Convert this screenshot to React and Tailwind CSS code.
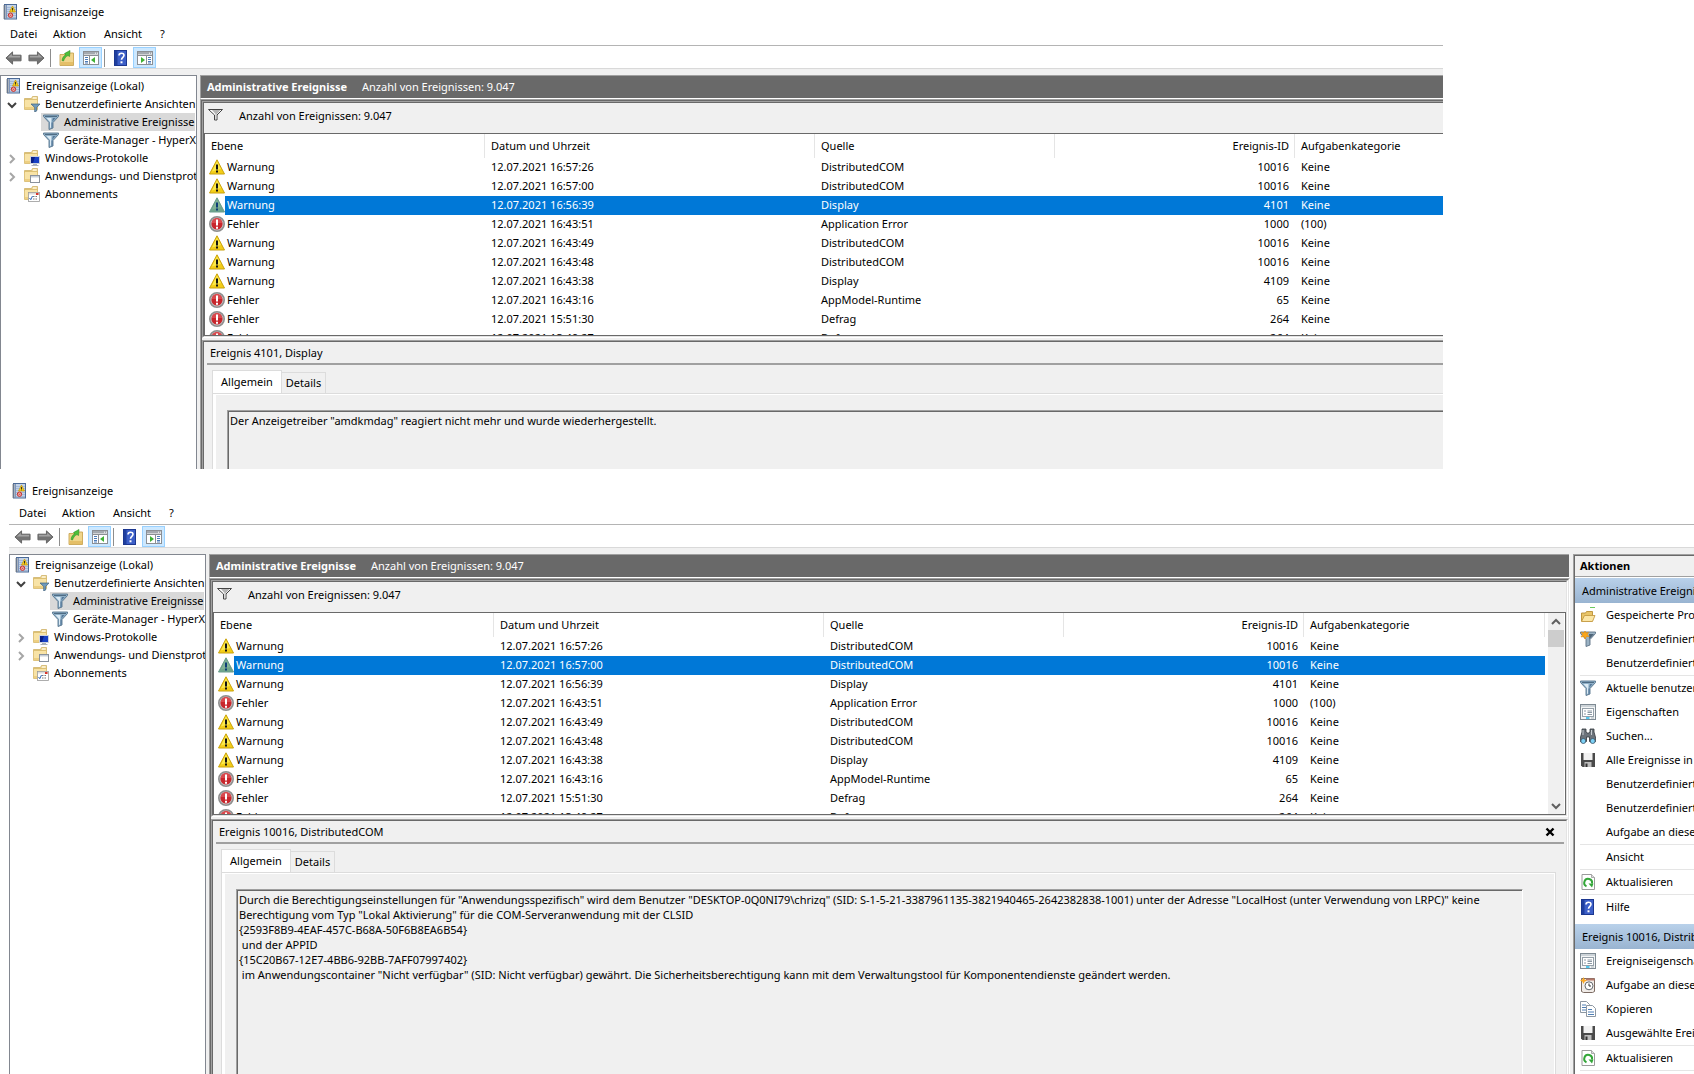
import React from 'react';
import clsx from 'clsx';

const events = [
  { level: 'Warnung', date: '12.07.2021 16:57:26', source: 'DistributedCOM', id: '10016', category: 'Keine' },
  { level: 'Warnung', date: '12.07.2021 16:57:00', source: 'DistributedCOM', id: '10016', category: 'Keine' },
  { level: 'Warnung', date: '12.07.2021 16:56:39', source: 'Display', id: '4101', category: 'Keine' },
  { level: 'Fehler', date: '12.07.2021 16:43:51', source: 'Application Error', id: '1000', category: '(100)' },
  { level: 'Warnung', date: '12.07.2021 16:43:49', source: 'DistributedCOM', id: '10016', category: 'Keine' },
  { level: 'Warnung', date: '12.07.2021 16:43:48', source: 'DistributedCOM', id: '10016', category: 'Keine' },
  { level: 'Warnung', date: '12.07.2021 16:43:38', source: 'Display', id: '4109', category: 'Keine' },
  { level: 'Fehler', date: '12.07.2021 16:43:16', source: 'AppModel-Runtime', id: '65', category: 'Keine' },
  { level: 'Fehler', date: '12.07.2021 15:51:30', source: 'Defrag', id: '264', category: 'Keine' },
  { level: 'Fehler', date: '12.07.2021 13:49:27', source: 'Defrag', id: '264', category: 'Keine' },
];

const comMessage = `Durch die Berechtigungseinstellungen für "Anwendungsspezifisch" wird dem Benutzer "DESKTOP-0Q0NI79\\chrizq" (SID: S-1-5-21-3387961135-3821940465-2642382838-1001) unter der Adresse "LocalHost (unter Verwendung von LRPC)" keine
Berechtigung vom Typ "Lokal Aktivierung" für die COM-Serveranwendung mit der CLSID
{2593F8B9-4EAF-457C-B68A-50F6B8EA6B54}
 und der APPID
{15C20B67-12E7-4BB6-92BB-7AFF07997402}
 im Anwendungscontainer "Nicht verfügbar" (SID: Nicht verfügbar) gewährt. Die Sicherheitsberechtigung kann mit dem Verwaltungstool für Komponentendienste geändert werden.`;

/* ---------- Icons ---------- */

const Svg = ({ children, className }) => (
  <svg viewBox="0 0 16 16" className={clsx('w-4 h-4 shrink-0', className)} aria-hidden="true">
    {children}
  </svg>
);

const LogIcon = () => (
  <Svg>
    <rect x="1.500" y="0.500" width="12" height="14.500" fill="#c3d3e8" stroke="#4b6a97" />
    <path d="M4 3.500h9M4 5.500h9M4 7.500h9M4 9.500h9M4 11.500h9M4 13.500h9" stroke="#8ea8cc" strokeWidth="0.600" />
    <path d="M3.500 1v13.500" stroke="#6c87b0" strokeWidth="0.800" />
    <path d="M0 2h3M0 4h3M0 6h3M0 8h3M0 10h3M0 12h3M0 14h3" stroke="#8a8a8a" strokeWidth="0.900" />
    <path d="M9.500 2L12.500 8h-6z" fill="#f5cd18" stroke="#c79a08" strokeWidth="0.700" />
    <path d="M9.500 4v2M9.500 6.500v0.800" stroke="#222" strokeWidth="0.900" />
    <circle cx="7.500" cy="11.200" r="2.200" fill="#f0b3b0" stroke="#c9302a" />
    <path d="M6.800 10.500l1.400 1.400M8.200 10.500l-1.400 1.400" stroke="#c9302a" strokeWidth="0.700" />
  </Svg>
);

const ArrowIcon = ({ forward }) => (
  <svg viewBox="0 0 18 16" className={clsx('w-[17px] h-4 shrink-0', forward && '-scale-x-100')} aria-hidden="true">
    <path d="M1 8l7-6.500v3.500h9v6H8v3.500z" fill="#747474" stroke="#636363" strokeLinejoin="round" />
    <path d="M2.800 7.600L7.200 3.500V6H16v1.600z" fill="#a3a3a3" />
  </svg>
);

const FolderBase = () => (
  <>
    <path d="M0.500 2.500h7l1-2h5v4h-13z" fill="#f3dc96" stroke="#cdb068" strokeWidth="0.800" />
    <path d="M9 1.500h3.500v1H9z" fill="#fff" />
    <path d="M0.500 3.500h13v10H0.500z" fill="#f8e3a6" stroke="#d6b868" strokeWidth="0.800" />
    <path d="M1 11h12v2H1z" fill="#edcf82" />
  </>
);

const funnelPath = 'M0.500 1h15v1.500L10 8.500V14l-4 1.500v-7L0.500 2.500z';

const FolderFilterIcon = () => (
  <Svg>
    <FolderBase />
    <path d="M7 8h9l-3.300 3.500V15l-2 1v-4.500z" fill="#6f9abc" stroke="#41627d" strokeWidth="0.700" />
  </Svg>
);

const FolderMonitorIcon = () => (
  <Svg>
    <FolderBase />
    <rect x="6.500" y="6.500" width="9" height="7" fill="#1740c4" stroke="#cdd3dd" />
    <path d="M7 7h4l-2 6H7z" fill="#0a1f86" />
    <path d="M9 14h4v1h1.500v1h-7v-1H9z" fill="#a9b0ba" />
  </Svg>
);

const FolderWindowIcon = () => (
  <Svg>
    <FolderBase />
    <rect x="6.500" y="7.500" width="9" height="7" fill="#fff" stroke="#8a929c" />
    <path d="M7 8h8v1.500H7z" fill="#c8d0d9" />
  </Svg>
);

const FolderCalendarIcon = () => (
  <Svg>
    <FolderBase />
    <rect x="4.500" y="6.500" width="11" height="9" fill="#fff" stroke="#9a9a9a" strokeWidth="0.800" />
    <path d="M5 7h10v1.500H5z" fill="#ddd" />
    <path d="M12 7h2.500v2H12z" fill="#d9342b" />
    <path d="M9 10.500h1.500M11.500 10.500H13M9 13h1.500M11.500 13H13" stroke="#777" />
    <path d="M5.500 12l1.300 1.700L8.500 10" stroke="#2a64b8" fill="none" />
  </Svg>
);

const FunnelIcon = () => (
  <Svg>
    <path d={funnelPath} fill="#8fb0c8" stroke="#56748c" strokeWidth="0.900" />
    <path d="M2 2h12v0.800H2z" fill="#3f5c74" />
    <path d="M3.500 4h5L8 13.500 7 14V8z" fill="#dcebf5" />
    <path d="M9 8l3.500-4H10z" fill="#57799a" />
    <path d="M8.500 8.500h1.200v5l-1.200 0.500z" fill="#57799a" />
  </Svg>
);

const FunnelNewIcon = () => (
  <Svg>
    <path d={funnelPath} fill="#9ab2c4" stroke="#5d7386" strokeWidth="0.900" />
    <path d="M9 3h5L9.500 8v6z" fill="#4e6578" />
    <path d="M5 0l1 2 2.500-0.700L7.400 3.500 9 5.500 6.500 5.500 5 8 3.900 5.500 1 6l1.600-2.500L1.200 1.200 4 2z" fill="#f9a61a" stroke="#e58d0c" strokeWidth="0.600" />
  </Svg>
);

const FunnelOutlineIcon = () => (
  <Svg>
    <path d="M0.500 1.500h14L9 7v5H6.500V7z" fill="#fff" stroke="#444" />
    <path d="M4 2h8.500L8.500 6.500V11H7.500V6z" fill="#b5b5b5" />
  </Svg>
);

const WarningIcon = ({ selected }) => (
  <Svg>
    <path
      d="M8 0.800L15.500 15H0.500z"
      fill={selected ? '#6fa58b' : '#f3cd17'}
      stroke={selected ? '#6a9c8c' : '#c9a20e'}
      strokeLinejoin="round"
    />
    <path d="M8 2.500L12 10 3 12.500z" fill={selected ? '#83b396' : '#fbe94c'} />
    <path d="M7 5.500h2v5H7zM7 11.500h2v2H7z" fill={selected ? '#0d3d78' : '#111'} />
  </Svg>
);

const ErrorIcon = () => (
  <Svg>
    <circle cx="8" cy="8" r="7.200" fill="#c9c9c9" stroke="#8e8e8e" strokeWidth="1.600" />
    <circle cx="8" cy="8" r="5.600" fill="#c8262c" />
    <path d="M2.800 7a5.200 5.200 0 0 1 10.400 0z" fill="#d9494d" />
    <path d="M7 3.500h2v6H7zM7 10.700h2v2H7z" fill="#fff" />
  </Svg>
);

const ExportIcon = () => (
  <Svg>
    <path d="M1 4.500h5l1-1.500h7.500v12.500H1z" fill="#f0d58b" stroke="#c9a654" strokeWidth="0.900" />
    <path d="M1.500 12h12.500v3H1.500z" fill="#e4bf68" />
    <path d="M3 10.500C3.500 7 5 5.500 7 5L5.500 3.500 11 0.500l-0.500 6L9 5.500C7 6.500 5.500 8 4.500 11z" fill="#4cc03a" stroke="#2f8e24" strokeWidth="0.600" />
  </Svg>
);

const PaneIcon = ({ right }) => (
  <Svg>
    <rect x="0.500" y="1.500" width="15" height="13" fill="#fff" stroke="#8b8f94" />
    <path d="M1 2h14v2.500H1z" fill="#a4a9af" />
    <path d="M12 3.200h1M14 3.200h1" stroke="#fff" />
    <path d="M1 5.500h14" stroke="#8b8f94" />
    {right ? (
      <>
        <path d="M9.500 5.500v9" stroke="#8b8f94" />
        <path d="M11 7.500h3M11 9.500h3M11 11.500h3M11 13h3" stroke="#4a7ab8" />
        <path d="M4 7l4 3-4 3z" fill="#3fb134" />
      </>
    ) : (
      <>
        <path d="M6.500 5.500v9" stroke="#8b8f94" />
        <path d="M2 7.500h3M2 9.500h3M2 11.500h3M2 13h3" stroke="#4a7ab8" />
        <path d="M12 7l-4 3 4 3z" fill="#3fb134" />
      </>
    )}
  </Svg>
);

const HelpIcon = () => (
  <Svg>
    <rect x="1.500" y="0.500" width="12" height="15" fill="#3c5fc8" stroke="#1c3790" />
    <path d="M2 1h2.500v14H2z" fill="#1f3f9f" />
    <path d="M6 5.500C6 2.500 11 2.500 11 5.300 11 7.300 8.500 7.500 8.500 9.800" stroke="#fff" strokeWidth="1.600" fill="none" />
    <path d="M7.500 11.300h2v2h-2z" fill="#fff" />
  </Svg>
);

const OpenFolderIcon = () => (
  <Svg>
    <path d="M10 0.500h5" stroke="#6cc95f" />
    <path d="M1.500 14V6h4l1-1.500h6V14z" fill="#e9c568" stroke="#b98e36" strokeWidth="0.900" />
    <path d="M1.500 14.500l3-6H15l-2.500 6z" fill="#fbe6a6" stroke="#c59b43" strokeWidth="0.900" />
  </Svg>
);

const PropertiesIcon = () => (
  <Svg>
    <rect x="0.500" y="0.500" width="15" height="15" fill="#f3f5f6" stroke="#7e8a93" />
    <path d="M1 1h14v2H1z" fill="#ccd3d8" />
    <rect x="2.500" y="4.500" width="11" height="8" fill="#fff" stroke="#96a1aa" />
    <path d="M4 7h2M4 10h2M7.500 7H12M7.500 8.500H12M7.500 10.500H12" stroke="#8c98a3" />
    <path d="M6 14h3.500" stroke="#22b6e8" strokeWidth="1.500" />
    <path d="M11 14h3" stroke="#a9b4bb" />
  </Svg>
);

const BinocularsIcon = () => (
  <Svg>
    <path d="M2 1h4v3l1.500 1h1L10 4V1h4v3l1.700 6v3.500H9.500V9h-3v4.500H0.300V10L2 4z" fill="#6c737b" stroke="#30353b" strokeWidth="0.800" />
    <path d="M3 2v5M11.500 2v5" stroke="#c9ced3" />
    <circle cx="3.300" cy="13" r="2.500" fill="#7bd0f5" stroke="#3b5163" strokeWidth="0.800" />
    <circle cx="12.700" cy="13" r="2.500" fill="#7bd0f5" stroke="#3b5163" strokeWidth="0.800" />
  </Svg>
);

const SaveIcon = () => (
  <Svg>
    <path d="M1 1h14v14H2.500L1 13.500z" fill="#4a4a4a" />
    <path d="M3.500 1h9v7h-9z" fill="#f2f2f2" />
    <path d="M4.500 10h7v5h-7z" fill="#bdbdbd" />
    <path d="M5.500 11.500h2V15h-2z" fill="#333" />
  </Svg>
);

const RefreshIcon = () => (
  <Svg>
    <path d="M2 0.500h9.500L14.500 3.500v12H2z" fill="#fff" stroke="#9b9b9b" />
    <path d="M11.500 0.500v3h3" fill="#ddd" stroke="#9b9b9b" strokeWidth="0.800" />
    <path d="M6.500 12.300A3.900 3.900 0 1 1 12 9.500" fill="none" stroke="#33a638" strokeWidth="2" />
    <path d="M8.500 9.500h5L12 13.500z" fill="#33a638" />
  </Svg>
);

const TaskIcon = () => (
  <Svg>
    <path d="M1.500 1.500h13v13l-2 1h-9l-2-1z" fill="#f1ece8" stroke="#7b6a62" />
    <path d="M6 1.500h8.500v2H6z" fill="#b4786a" />
    <circle cx="9" cy="8.800" r="4" fill="#fff" stroke="#62676c" />
    <path d="M9 6.500V9h2" stroke="#333" fill="none" />
    <path d="M3.500 0l1 2.300L7 3.500 4.500 4.700 3.500 7 2.500 4.700 0 3.500l2.500-1.200z" fill="#f9a825" />
  </Svg>
);

const CopyIcon = () => (
  <Svg>
    <path d="M0.500 0.500h6l3 3v8h-9z" fill="#fff" stroke="#8d97a2" />
    <path d="M2 4h4M2 6.500h5M2 9h5" stroke="#4f7fb5" />
    <path d="M6.500 4.500h6l3 3v8h-9z" fill="#fff" stroke="#8d97a2" />
    <path d="M8 8.500h4M8 11h6M8 13.500h6" stroke="#4f7fb5" />
  </Svg>
);

const Chevron = ({ d, className }) => (
  <svg viewBox="0 0 10 10" className={clsx('w-[10px] h-[10px] shrink-0', className)} fill="none" stroke="currentColor" aria-hidden="true">
    <path d={d} strokeWidth="2" />
  </svg>
);

/* ---------- Building blocks ---------- */

// Classic two pixel sunken 3D edge, right and bottom edges are optional
const Sunken = ({ children, className, right = true, bottom = true }) => (
  <div
    className={clsx(
      'flex flex-col min-w-0 border-t border-l border-t-[#a0a0a0] border-l-[#a0a0a0]',
      right && 'border-r border-r-white',
      bottom && 'border-b border-b-white',
      className
    )}
  >
    <div
      className={clsx(
        'flex-1 flex flex-col min-h-0 border-t border-l border-t-[#696969] border-l-[#696969]',
        right && 'border-r border-r-[#e3e3e3]',
        bottom && 'border-b border-b-[#e3e3e3]'
      )}
    >
      {children}
    </div>
  </div>
);

const Toolbar = () => (
  <div className="flex items-center h-[23px] border-b border-[#d9d9d9] pl-[5px] pt-px">
    <button aria-label="Zurück"><ArrowIcon /></button>
    <button aria-label="Vorwärts" className="ml-[6px]"><ArrowIcon forward /></button>
    <span className="w-px h-[18px] bg-[#8d8d8d] ml-[5px]" />
    <button aria-label="Nach oben" className="ml-2"><ExportIcon /></button>
    <button aria-label="Struktur anzeigen" className="ml-1 w-[23px] h-[21px] flex items-center justify-center bg-[#cce8ff] border border-[#99d1ff]">
      <PaneIcon />
    </button>
    <span className="w-px h-[18px] bg-[#8d8d8d] ml-[2px]" />
    <button aria-label="Hilfe" className="ml-2"><HelpIcon /></button>
    <button aria-label="Aktionsbereich anzeigen" className="ml-1 w-[23px] h-[21px] flex items-center justify-center bg-[#cce8ff] border border-[#99d1ff]">
      <PaneIcon right />
    </button>
  </div>
);

const treeItems = [
  { label: 'Benutzerdefinierte Ansichten', icon: FolderFilterIcon, open: true },
  { label: 'Administrative Ereignisse', icon: FunnelIcon, child: true, active: true },
  { label: 'Geräte-Manager - HyperX', icon: FunnelIcon, child: true },
  { label: 'Windows-Protokolle', icon: FolderMonitorIcon, closed: true },
  { label: 'Anwendungs- und Dienstprotokolle', icon: FolderWindowIcon, closed: true },
  { label: 'Abonnements', icon: FolderCalendarIcon },
];

const Tree = () => (
  <nav className="w-[197px] shrink-0 bg-white border border-b-0 border-[#828790] pt-px pr-px overflow-hidden">
    <div className="flex items-center h-[18px] pl-[5px] gap-1">
      <LogIcon />
      <span>Ereignisanzeige (Lokal)</span>
    </div>
    {treeItems.map(({ label, icon: Icon, child, active, open, closed }) => (
      <div key={label} className={clsx('flex items-center h-[18px]', child ? 'pl-10' : 'pl-[5px]')}>
        {!child && (
          <span className="w-[18px] flex shrink-0 pl-px pt-px">
            {open && <Chevron d="M1 3l4 4 4-4" className="text-[#404040]" />}
            {closed && <Chevron d="M3 1l4 4-4 4" className="text-[#a6a6a6]" />}
          </span>
        )}
        <div className={clsx('flex-1 min-w-0 h-full flex items-center gap-[5px]', child && 'pl-[2px]', active && 'bg-[#d9d9d9]')}>
          <Icon />
          <span className="whitespace-nowrap">{label}</span>
        </div>
      </div>
    ))}
  </nav>
);

const EventTable = ({ selected, full }) => (
  <table className="table-fixed w-full border-separate border-spacing-0 text-left">
    <colgroup>
      <col className="w-[280px]" />
      <col className="w-[330px]" />
      <col className="w-[240px]" />
      <col className="w-[240px]" />
      <col />
    </colgroup>
    <thead>
      <tr className="h-6">
        <th className="p-0 pl-[6px] font-normal border-r border-[#e5e5e5]">Ebene</th>
        <th className="p-0 pl-[6px] font-normal border-r border-[#e5e5e5]">Datum und Uhrzeit</th>
        <th className="p-0 pl-[6px] font-normal border-r border-[#e5e5e5]">Quelle</th>
        <th className="p-0 pr-[5px] font-normal border-r border-[#e5e5e5] text-right">Ereignis-ID</th>
        <th className={clsx('p-0 pl-[6px] font-normal border-[#e5e5e5]', full && 'border-r')}>Aufgabenkategorie</th>
      </tr>
    </thead>
    <tbody>
      {events.map((event, index) => {
        const isSelected = index === selected;
        return (
          <tr key={event.date} className={clsx('h-[19px] leading-4', isSelected && 'bg-[#0078d7] text-white')}>
            <td className="p-0">
              <div className="flex items-center h-[19px]">
                <span className="w-5 h-full pl-1 pb-px flex items-center shrink-0 bg-white">
                  {event.level === 'Warnung' ? <WarningIcon selected={isSelected} /> : <ErrorIcon />}
                </span>
                <span className="pl-[2px] pb-px">{event.level}</span>
              </div>
            </td>
            <td className="p-0 pl-[6px] pb-px">{event.date}</td>
            <td className="p-0 pl-[6px] pb-px">{event.source}</td>
            <td className="p-0 pr-[6px] pb-px text-right">{event.id}</td>
            <td className="p-0 pl-[6px] pb-px">{event.category}</td>
          </tr>
        );
      })}
    </tbody>
  </table>
);

const Scrollbar = () => (
  <div className="w-4 mr-px ml-[3px] shrink-0 bg-[#f0f0f0] flex flex-col">
    <button aria-label="Nach oben blättern" className="h-[17px] flex items-center justify-center text-[#606060]">
      <Chevron d="M1 7l4-4 4 4" />
    </button>
    <div className="h-[17px] bg-[#cdcdcd]" />
    <button aria-label="Nach unten blättern" className="h-[17px] mt-auto flex items-center justify-center text-[#606060]">
      <Chevron d="M1 3l4 4 4-4" />
    </button>
  </div>
);

const Tabs = () => (
  <div className="flex items-end" role="tablist">
    <button role="tab" aria-selected="true" className="h-6 w-[70px] -mb-px pb-[2px] bg-white border border-b-0 border-[#dcdcdc]">
      Allgemein
    </button>
    <button role="tab" aria-selected="false" className="h-[21px] w-11 border border-l-0 border-b-0 border-[#dcdcdc]">
      Details
    </button>
  </div>
);

const EventDetail = ({ heading, message, full }) => (
  <div className="flex-1 flex flex-col bg-[#f0f0f0]">
    <div className={clsx('ml-[3px] h-[23px] flex items-center justify-between border-b-2 border-[#a0a0a0] pl-[3px]', full && 'mr-[2px]')}>
      <h2>{heading}</h2>
      {full && (
        <button aria-label="Schließen" className="mr-[9px]">
          <svg viewBox="0 0 10 10" className="w-[10px] h-[10px]" aria-hidden="true">
            <path d="M1.500 1.500l7 7M8.500 1.500l-7 7" stroke="#000" strokeWidth="2.400" />
          </svg>
        </button>
      )}
    </div>
    <div className={clsx('flex-1 flex flex-col ml-2 mt-[5px]', full && 'mr-[10px]')}>
      <Tabs />
      <div className={clsx('flex-1 flex flex-col border-t border-l border-[#dcdcdc]', full && 'border-r')}>
        <div className={clsx('flex-1 flex flex-col border-t border-l-[3px] border-white pl-[11px] pt-[15px]', full && 'border-r pr-[31px]')}>
          <div className={clsx('flex-1 flex flex-col border-t border-l border-t-[#a0a0a0] border-l-[#a0a0a0]', full && 'border-r border-r-white')}>
            <textarea
              readOnly
              wrap="off"
              rows={3}
              aria-label="Ereignisbeschreibung"
              value={message}
              className="flex-1 block min-h-[58px] resize-none overflow-hidden outline-none bg-[#f0f0f0] border-t border-l border-[#696969] pl-px pt-px leading-[15px]"
            />
          </div>
        </div>
      </div>
    </div>
  </div>
);

const ActionHeading = ({ children }) => (
  <h3 className="h-[25px] flex items-center pl-[7px] bg-gradient-to-b from-[#b9d1ea] to-[#99b4d1]">{children}</h3>
);

const Action = ({ icon: Icon, children }) => (
  <button className="w-full h-6 flex items-center pl-[5px] gap-[10px]">
    <span className="w-4 shrink-0">{Icon && <Icon />}</span>
    {children}
  </button>
);

const Divider = () => <div className="h-px ml-[5px] bg-[#e5e5e5]" />;

const ActionsPane = () => (
  <aside className="w-[121px] shrink-0 overflow-hidden ml-[3px] border-l border-t border-[#a0a0a0]">
    <div className="h-full border-l border-t border-[#696969] bg-white whitespace-nowrap">
      <h2 className="h-[21px] flex items-center pl-[5px] font-bold bg-[#f0f0f0] border-b border-[#a0a0a0] mb-px">Aktionen</h2>
      <ActionHeading>Administrative Ereignisse</ActionHeading>
      <Action icon={OpenFolderIcon}>Gespeicherte Protokolldatei</Action>
      <Action icon={FunnelNewIcon}>Benutzerdefinierte</Action>
      <Action>Benutzerdefinierte</Action>
      <Divider />
      <Action icon={FunnelIcon}>Aktuelle benutzerdefinierte</Action>
      <Action icon={PropertiesIcon}>Eigenschaften</Action>
      <Action icon={BinocularsIcon}>Suchen...</Action>
      <Action icon={SaveIcon}>Alle Ereignisse in</Action>
      <Action>Benutzerdefinierte</Action>
      <Action>Benutzerdefinierte</Action>
      <Action>Aufgabe an diese</Action>
      <Divider />
      <Action>Ansicht</Action>
      <Divider />
      <Action icon={RefreshIcon}>Aktualisieren</Action>
      <Divider />
      <Action icon={HelpIcon}>Hilfe</Action>
      <div className="h-[5px]" />
      <ActionHeading>Ereignis 10016, DistributedCOM</ActionHeading>
      <Action icon={PropertiesIcon}>Ereigniseigenschaften</Action>
      <Action icon={TaskIcon}>Aufgabe an dieses</Action>
      <Action icon={CopyIcon}>Kopieren</Action>
      <Action icon={SaveIcon}>Ausgewählte Ereignisse</Action>
      <Divider />
      <Action icon={RefreshIcon}>Aktualisieren</Action>
      <Divider />
    </div>
  </aside>
);

const EventViewer = ({ selected, heading, message, full, className }) => (
  <section className={clsx('flex flex-col overflow-hidden', className)}>
    <header className="flex items-center h-[23px] pl-[3px] gap-1">
      <LogIcon />
      <h1>Ereignisanzeige</h1>
    </header>
    <div className="flex items-center h-[23px] pl-[10px] border-b border-[#b4b4b4]">
      <button className="w-[43px] text-left">Datei</button>
      <button className="w-[51px] text-left">Aktion</button>
      <button className="w-14 text-left">Ansicht</button>
      <button>?</button>
    </div>
    <Toolbar />
    <div className="flex-1 flex bg-[#f0f0f0] pt-[6px]">
      <Tree />
      <main className="flex-1 min-w-0 flex flex-col ml-[3px]">
        <div
          className={clsx(
            'flex items-center h-6 pl-[6px] bg-[#696969] text-white border-t border-l border-t-[#a0a0a0] border-l-[#a0a0a0] border-b border-b-white',
            full && 'mr-px'
          )}
        >
          <span className="w-[155px] font-bold">Administrative Ereignisse</span>
          <span>Anzahl von Ereignissen: 9.047</span>
        </div>
        <Sunken className="flex-1" right={full} bottom={false}>
          <Sunken right={full}>
            <div className="flex items-start h-[30px] pl-1 pt-[5px] bg-[#f0f0f0]">
              <FunnelOutlineIcon />
              <span className="pl-[15px]">Anzahl von Ereignissen: 9.047</span>
            </div>
            <div className={clsx('flex h-[203px] bg-white border border-[#696969] overflow-hidden', !full && 'border-r-0')}>
              <div className="flex-1 min-w-0">
                <EventTable selected={selected} full={full} />
              </div>
              {full && <Scrollbar />}
            </div>
          </Sunken>
          <Sunken className="flex-1 mt-[2px]" right={full} bottom={false}>
            <EventDetail heading={heading} message={message} full={full} />
          </Sunken>
        </Sunken>
      </main>
      {full && <ActionsPane />}
    </div>
  </section>
);

export default function App() {
  return (
    <div className="min-h-screen flex flex-col gap-[10px] bg-white text-black text-[11px] leading-4 font-['Noto_Sans','Open_Sans',sans-serif] overflow-hidden">
      <EventViewer
        selected={2}
        full={false}
        heading="Ereignis 4101, Display"
        message={'Der Anzeigetreiber "amdkmdag" reagiert nicht mehr und wurde wiederhergestellt.'}
        className="mr-[251px]"
      />
      <EventViewer
        selected={1}
        full
        heading="Ereignis 10016, DistributedCOM"
        message={comMessage}
        className="ml-[9px] flex-1"
      />
    </div>
  );
}
